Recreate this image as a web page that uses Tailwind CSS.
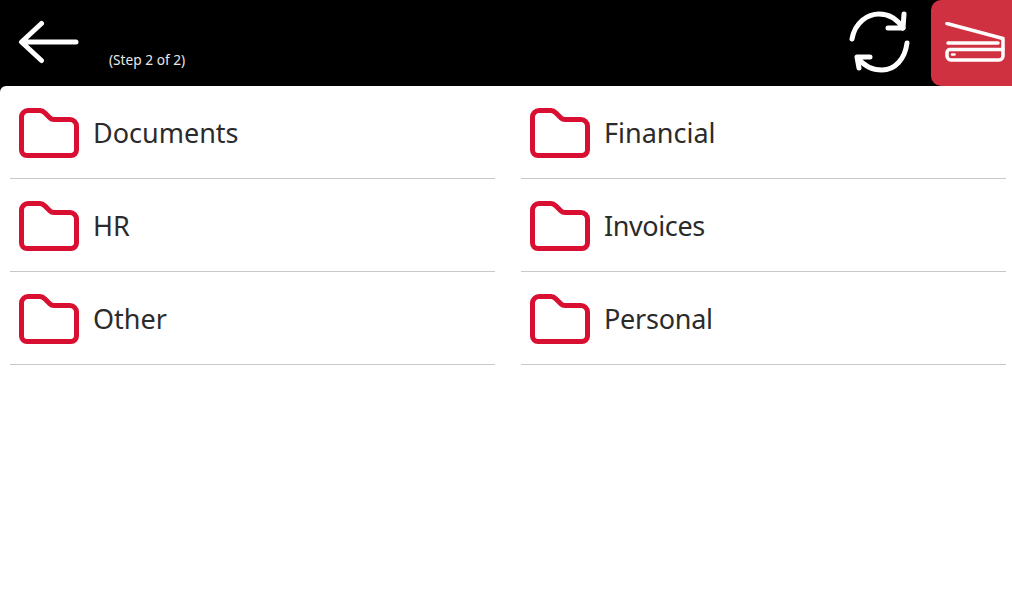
<!DOCTYPE html>
<html>
<head>
<meta charset="utf-8">
<script src="https://cdn.jsdelivr.net/npm/@tailwindcss/browser@4"></script>
</head>
<body class="m-0 bg-white font-['Noto_Sans','Open_Sans',sans-serif]">
<div class="w-[1012px] h-[591px] overflow-hidden bg-black flex flex-col">
  <header class="h-[86px] shrink-0 flex items-stretch bg-black">
    <div class="w-[109px] shrink-0 pl-[18px] pt-[20px]">
      <svg width="62" height="44" viewBox="0 0 62 44" fill="none" stroke="#fff" stroke-width="5" stroke-linecap="round" stroke-linejoin="round"><path d="M58 22H4M23.500 3.500 3.500 22l20 18.500"/></svg>
    </div>
    <div class="flex-1 pt-[51px] text-[13.7px] leading-[18px] text-[#e8e8e8]">(Step 2 of 2)</div>
    <div class="w-[82px] shrink-0 pt-[11px]">
      <svg width="62" height="62" viewBox="0 0 62 62" fill="none" stroke="#fff" stroke-width="5" stroke-linecap="round" stroke-linejoin="round"><path d="M3 28C6 11 19 3 30 3c10 0 18 5 24 14"/><path d="M55 3l-1 14H39"/><path d="M58 32C56 48 46 59 33 59c-9 0-18-4-24-12"/><path d="M21 46H8l2 11"/></svg>
    </div>
    <div class="w-[81px] shrink-0 bg-[#d03140] rounded-l-[10px] pl-[14px] pt-[22px]">
      <svg width="60" height="40" viewBox="0 0 60 40" fill="none" stroke="#fff" stroke-width="3.500" stroke-linecap="round" stroke-linejoin="round"><path d="M2 1.500l56 15V27"/><path d="M3 21h50"/><path d="M5 27.500h53V34a4 4 0 0 1-4 4H6a4 4 0 0 1-4-4v-3.500a3 3 0 0 1 3-3z"/><path d="M7 32.500h2.500" stroke-width="2.500"/></svg>
    </div>
  </header>
  <main class="flex-1 bg-white rounded-tl-[6px] pl-[10px] pr-[6px] grid grid-cols-2 gap-x-[26px] content-start">
    <div class="h-[93px] border-b border-[#c8c8c8] flex items-center gap-[14px] pl-[9px] pt-[1px] text-[27px] text-[#2b2b2b]"><svg width="60" height="50" viewBox="0 0 60 50" fill="none" stroke="#d90f32" stroke-width="5" stroke-linejoin="round"><path d="M2.500 9A6.500 6.500 0 0 1 9 2.500h12c2 0 3 .5 5 2.500l5 5c1 1 2 1.500 4 1.500h16a6.500 6.500 0 0 1 6.500 6.500V42a5.500 5.500 0 0 1-5.500 5.500H8A5.500 5.500 0 0 1 2.500 42z"/></svg><span class="mt-[2px]">Documents</span></div>
    <div class="h-[93px] border-b border-[#c8c8c8] flex items-center gap-[14px] pl-[9px] pt-[1px] text-[27px] text-[#2b2b2b]"><svg width="60" height="50" viewBox="0 0 60 50" fill="none" stroke="#d90f32" stroke-width="5" stroke-linejoin="round"><path d="M2.500 9A6.500 6.500 0 0 1 9 2.500h12c2 0 3 .5 5 2.500l5 5c1 1 2 1.500 4 1.500h16a6.500 6.500 0 0 1 6.500 6.500V42a5.500 5.500 0 0 1-5.500 5.500H8A5.500 5.500 0 0 1 2.500 42z"/></svg><span class="mt-[2px]">Financial</span></div>
    <div class="h-[93px] border-b border-[#c8c8c8] flex items-center gap-[14px] pl-[9px] pt-[1px] text-[27px] text-[#2b2b2b]"><svg width="60" height="50" viewBox="0 0 60 50" fill="none" stroke="#d90f32" stroke-width="5" stroke-linejoin="round"><path d="M2.500 9A6.500 6.500 0 0 1 9 2.500h12c2 0 3 .5 5 2.500l5 5c1 1 2 1.500 4 1.500h16a6.500 6.500 0 0 1 6.500 6.500V42a5.500 5.500 0 0 1-5.500 5.500H8A5.500 5.500 0 0 1 2.500 42z"/></svg><span class="mt-[2px]">HR</span></div>
    <div class="h-[93px] border-b border-[#c8c8c8] flex items-center gap-[14px] pl-[9px] pt-[1px] text-[27px] text-[#2b2b2b]"><svg width="60" height="50" viewBox="0 0 60 50" fill="none" stroke="#d90f32" stroke-width="5" stroke-linejoin="round"><path d="M2.500 9A6.500 6.500 0 0 1 9 2.500h12c2 0 3 .5 5 2.500l5 5c1 1 2 1.500 4 1.500h16a6.500 6.500 0 0 1 6.500 6.500V42a5.500 5.500 0 0 1-5.500 5.500H8A5.500 5.500 0 0 1 2.500 42z"/></svg><span class="mt-[2px] tracking-[-0.4px]">Invoices</span></div>
    <div class="h-[93px] border-b border-[#c8c8c8] flex items-center gap-[14px] pl-[9px] pt-[1px] text-[27px] text-[#2b2b2b]"><svg width="60" height="50" viewBox="0 0 60 50" fill="none" stroke="#d90f32" stroke-width="5" stroke-linejoin="round"><path d="M2.500 9A6.500 6.500 0 0 1 9 2.500h12c2 0 3 .5 5 2.500l5 5c1 1 2 1.500 4 1.500h16a6.500 6.500 0 0 1 6.500 6.500V42a5.500 5.500 0 0 1-5.500 5.500H8A5.500 5.500 0 0 1 2.500 42z"/></svg><span class="mt-[2px]">Other</span></div>
    <div class="h-[93px] border-b border-[#c8c8c8] flex items-center gap-[14px] pl-[9px] pt-[1px] text-[27px] text-[#2b2b2b]"><svg width="60" height="50" viewBox="0 0 60 50" fill="none" stroke="#d90f32" stroke-width="5" stroke-linejoin="round"><path d="M2.500 9A6.500 6.500 0 0 1 9 2.500h12c2 0 3 .5 5 2.500l5 5c1 1 2 1.500 4 1.500h16a6.500 6.500 0 0 1 6.500 6.500V42a5.500 5.500 0 0 1-5.500 5.500H8A5.500 5.500 0 0 1 2.500 42z"/></svg><span class="mt-[2px] tracking-[-0.25px]">Personal</span></div>
  </main>
</div>
</body>
</html>
